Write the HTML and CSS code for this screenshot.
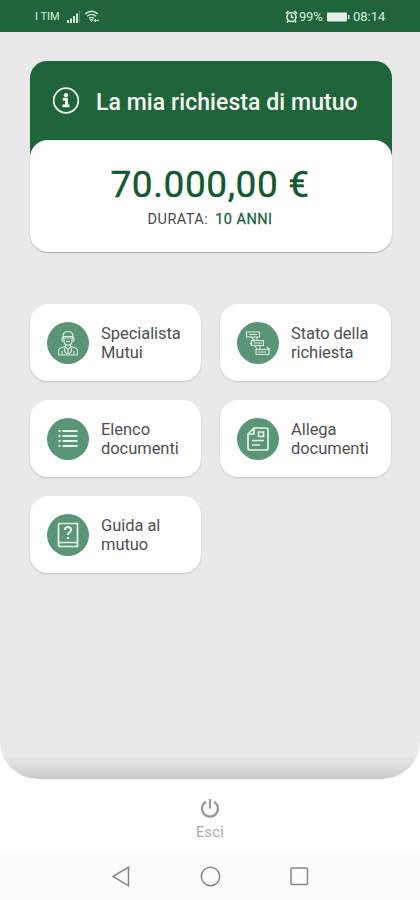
FILE: index.html
```html
<!DOCTYPE html>
<html lang="it">
<head>
<meta charset="utf-8">
<meta name="viewport" content="width=device-width, initial-scale=1">
<title>La mia richiesta di mutuo</title>
<link rel="stylesheet" href="styles.css">
</head>
<body>
<header class="status">
  <span class="carrier">I TIM</span>
  <svg class="signal" width="13" height="12" viewBox="0 0 13 12" fill="#d5e6da"><path d="M0 9h2v3H0zM3 7.500h2V12H3zM6 5h2v7H6zM9 2.500h2V12H9z"/><path d="M12 0h1v12h-1z" opacity=".3"/></svg>
  <svg class="wifi" width="16" height="13" viewBox="0 0 16 13" fill="none" stroke="#d5e6da" stroke-width="1.400"><path d="M1 4Q7.500-1.500 14 4M3 6.200Q7.500 2.500 12 6.200M5 8.300Q7.500 6.500 10 8.300"/><path d="M6 9.500h3l-1.500 2zM10 10.500h5M12 9l-2 1.500 2 1.500" stroke-width="1"/></svg>
  <span class="spacer"></span>
  <svg class="alarm" width="13" height="13" viewBox="0 0 13 13" fill="none" stroke="#e0eee4" stroke-width="1.600"><circle cx="6.500" cy="7" r="4.500"/><path d="M6.500 4.500V7l2 1M1 3.500 3.500 1M12 3.500 9.500 1M3 11l-1 1.500M10 11l1 1.500"/></svg>
  <span class="percent">99%</span>
  <svg class="battery" width="23" height="10" viewBox="0 0 23 10" fill="#e6f0e8"><rect y=".5" width="20" height="9" rx="1"/><path d="M21 3h1.500v4H21z"/></svg>
  <span class="clock">08:14</span>
</header>
<main class="content">
  <section class="loan">
    <div class="loan-head">
      <svg width="28" height="28" viewBox="0 0 28 28" fill="none" stroke="#f3faef"><circle cx="14" cy="13.500" r="12.300" stroke-width="1.800"/><circle cx="14" cy="8.300" r="2.200" fill="#f3faef" stroke="none"/><path d="M10.800 12.300H14.500V18.500M10.500 18.800h7" stroke-width="2.800"/></svg>
      <h1>La mia richiesta di mutuo</h1>
    </div>
    <div class="loan-body">
      <div class="amount">70.000,00 €</div>
      <div class="term"><span>DURATA:</span><b>10 ANNI</b></div>
    </div>
  </section>
  <nav class="tiles">
    <a class="tile"><span class="disc"><svg width="22" height="26" viewBox="0 0 22 26"><path d="M6 9V6.500Q6 1.500 11 1.500T16 6.500V9M5.500 6.500h11M7 7v4q0 4 4 4t4-4V7M5 7.500v3.500h2M17 7.500v3.500h-2M8 8h6M9 11.500h4M8.500 15v2L11 19.500 13.500 17v-2M8 16.500 3.500 18Q1.500 18.500 1.500 21v4h19v-4q0-2.500-2-3L14 16.500M11 19v6M5 21v4M17 21v4M7.500 18v3.500L10 24M14.500 18v3.500L12 24"/></svg></span><span class="label">Specialista<br>Mutui</span></a>
    <a class="tile"><span class="disc"><svg width="26" height="26" viewBox="0 0 26 26"><path d="M1.500 2h13v5h-13zM4 4.500h8M12 7v3.500M6.500 10.500h12v5h-12zM9 13h8M9 9v3M5 13l2 2M15 15.500V19M11 19.500h13v5H11zM13 22h8M22 17l3 3M6 7l3 3M10 16l2 3"/></svg></span><span class="label">Stato della<br>richiesta</span></a>
    <a class="tile"><span class="disc"><svg width="20" height="20" viewBox="0 0 20 20" class="bold"><path d="M0.500 2h2M4.500 2h15M0.500 7h2M4.500 7h15M0.500 12h2M4.500 12h15M0.500 17h2M4.500 17h15"/></svg></span><span class="label">Elenco<br>documenti</span></a>
    <a class="tile"><span class="disc"><svg width="24" height="26" viewBox="0 0 24 26" class="medium"><path d="M8 2h12q2 0 2 2v18q0 2-2 2H4q-2 0-2-2V8zM8 2v6H2M12.500 6h5v4.500h-5zM6 14.500h12M6 19h8"/></svg></span><span class="label">Allega<br>documenti</span></a>
    <a class="tile"><span class="disc"><svg width="22" height="26" viewBox="0 0 22 26" class="medium"><path d="M1.500 22.500V3q0-1.500 1.500-1.500h17.500v19H3q-1.500 0-1.500 2T3 24.500h17.500v-4"/><path d="M8 8q0-3 3-3t3 2.700Q14 9.300 12.500 10.300 11 11.300 11 13" stroke-width="2"/><path d="M11 15v2" stroke-width="2.200"/></svg></span><span class="label">Guida al<br>mutuo</span></a>
  </nav>
</main>
<footer class="exit">
  <svg width="20" height="20" viewBox="0 0 20 20" fill="none" stroke="#999" stroke-width="2.200"><path d="M6 3.700A8 8 0 1 0 14 3.700M10 1v9.500"/></svg>
  <span>Esci</span>
</footer>
<div class="system">
  <svg width="20" height="22" viewBox="0 0 20 22"><path d="M2 10.500 17.500 1.200v18.600z"/></svg>
  <svg width="22" height="22" viewBox="0 0 22 22"><circle cx="11.500" cy="10.500" r="9.200"/></svg>
  <svg width="20" height="20" viewBox="0 0 20 20"><rect x="2" y="1" width="16.500" height="16.500" rx="1"/></svg>
</div>
</body>
</html>
```
FILE: styles.css
```css
* { box-sizing: border-box; }
body {
  margin: 0;
  height: 900px;
  display: flex;
  flex-direction: column;
  overflow: hidden;
  background: #fefefe;
  font-family: Roboto, "Liberation Sans", sans-serif;
}
.status {
  height: 32px;
  flex: none;
  display: flex;
  align-items: center;
  padding: 1px 34px 0 35px;
  background: #20643c;
  color: #dcebe0;
  font-size: 13px;
}
.carrier { width: 32px; font-size: 11px; }
.wifi { margin-left: 4px; }
.spacer { flex: 1; }
.percent { margin-left: 1px; width: 28px; letter-spacing: -.2px; }
.clock { margin-left: 3px; width: 33px; }
.content {
  height: 747px;
  flex: none;
  padding: 29px 28px 0 30px;
  border-radius: 0 0 38px 38px;
  background: linear-gradient(to bottom, #e9e9e9 0, #e9e9e9 724px, #dcdcdc 734px, #cacaca 747px);
}
.loan {
  height: 191px;
  border-radius: 17px;
  background: linear-gradient(#20643c 0, #20643c 94px, #e9e9e9 94px);
}
.loan-head {
  height: 79px;
  display: flex;
  align-items: center;
  gap: 16px;
  padding-left: 22px;
}
.loan-head h1 {
  margin: 4px 0 0;
  color: #f6fbf3;
  font-size: 23px;
  line-height: 28px;
  font-weight: 500;
  letter-spacing: .07px;
  white-space: nowrap;
}
.loan-body {
  height: 112px;
  border-radius: 18px;
  background: #fff;
  box-shadow: 0 1px 1px #aaa;
  text-align: center;
  padding: 23px 2px 0 0;
}
.amount {
  color: #13592f;
  font-size: 37px;
  line-height: 44px;
  font-weight: 400;
  letter-spacing: .6px;
  -webkit-text-stroke: .4px #13592f;
}
.term {
  display: flex;
  justify-content: center;
  gap: 7px;
  margin-top: 4px;
  color: #484848;
  font-size: 14.500px;
  line-height: 18px;
  letter-spacing: .45px;
}
.term b {
  color: #20643c;
  font-weight: 400;
  -webkit-text-stroke: .3px #20643c;
}
.tiles {
  display: grid;
  grid-template-columns: 171px 171px;
  grid-auto-rows: 77px;
  gap: 19px;
  margin-top: 52px;
}
.tile {
  display: flex;
  align-items: center;
  gap: 12px;
  padding-left: 17px;
  border-radius: 18px;
  background: #fff;
  box-shadow: 0 1px 2px #c4c4c4;
}
.disc {
  width: 42px;
  height: 42px;
  flex: none;
  display: flex;
  align-items: center;
  justify-content: center;
  border-radius: 50%;
  background: #5a9676;
}
.disc svg { fill: none; stroke: #d9ecdd; stroke-width: 1.100; }
.disc .medium { stroke: #e6f4e8; stroke-width: 1.700; }
.disc .bold { stroke: #e6f4e8; stroke-width: 2; }
.label {
  padding-top: 1px;
  color: #505050;
  font-size: 16.500px;
  line-height: 19px;
  letter-spacing: -.05px;
}
.exit {
  height: 74px;
  flex: none;
  display: flex;
  flex-direction: column;
  align-items: center;
  padding-top: 19px;
  color: #ababab;
  font-size: 14.500px;
  line-height: 18px;
}
.exit span { margin-top: 6px; letter-spacing: .3px; }
.system {
  flex: 1;
  display: grid;
  grid-template-columns: 89px 89px 89px;
  justify-content: center;
  align-items: center;
  justify-items: center;
  background: #fcfcfc;
}
.system svg { fill: none; stroke: #858585; stroke-width: 1.500; }
```
